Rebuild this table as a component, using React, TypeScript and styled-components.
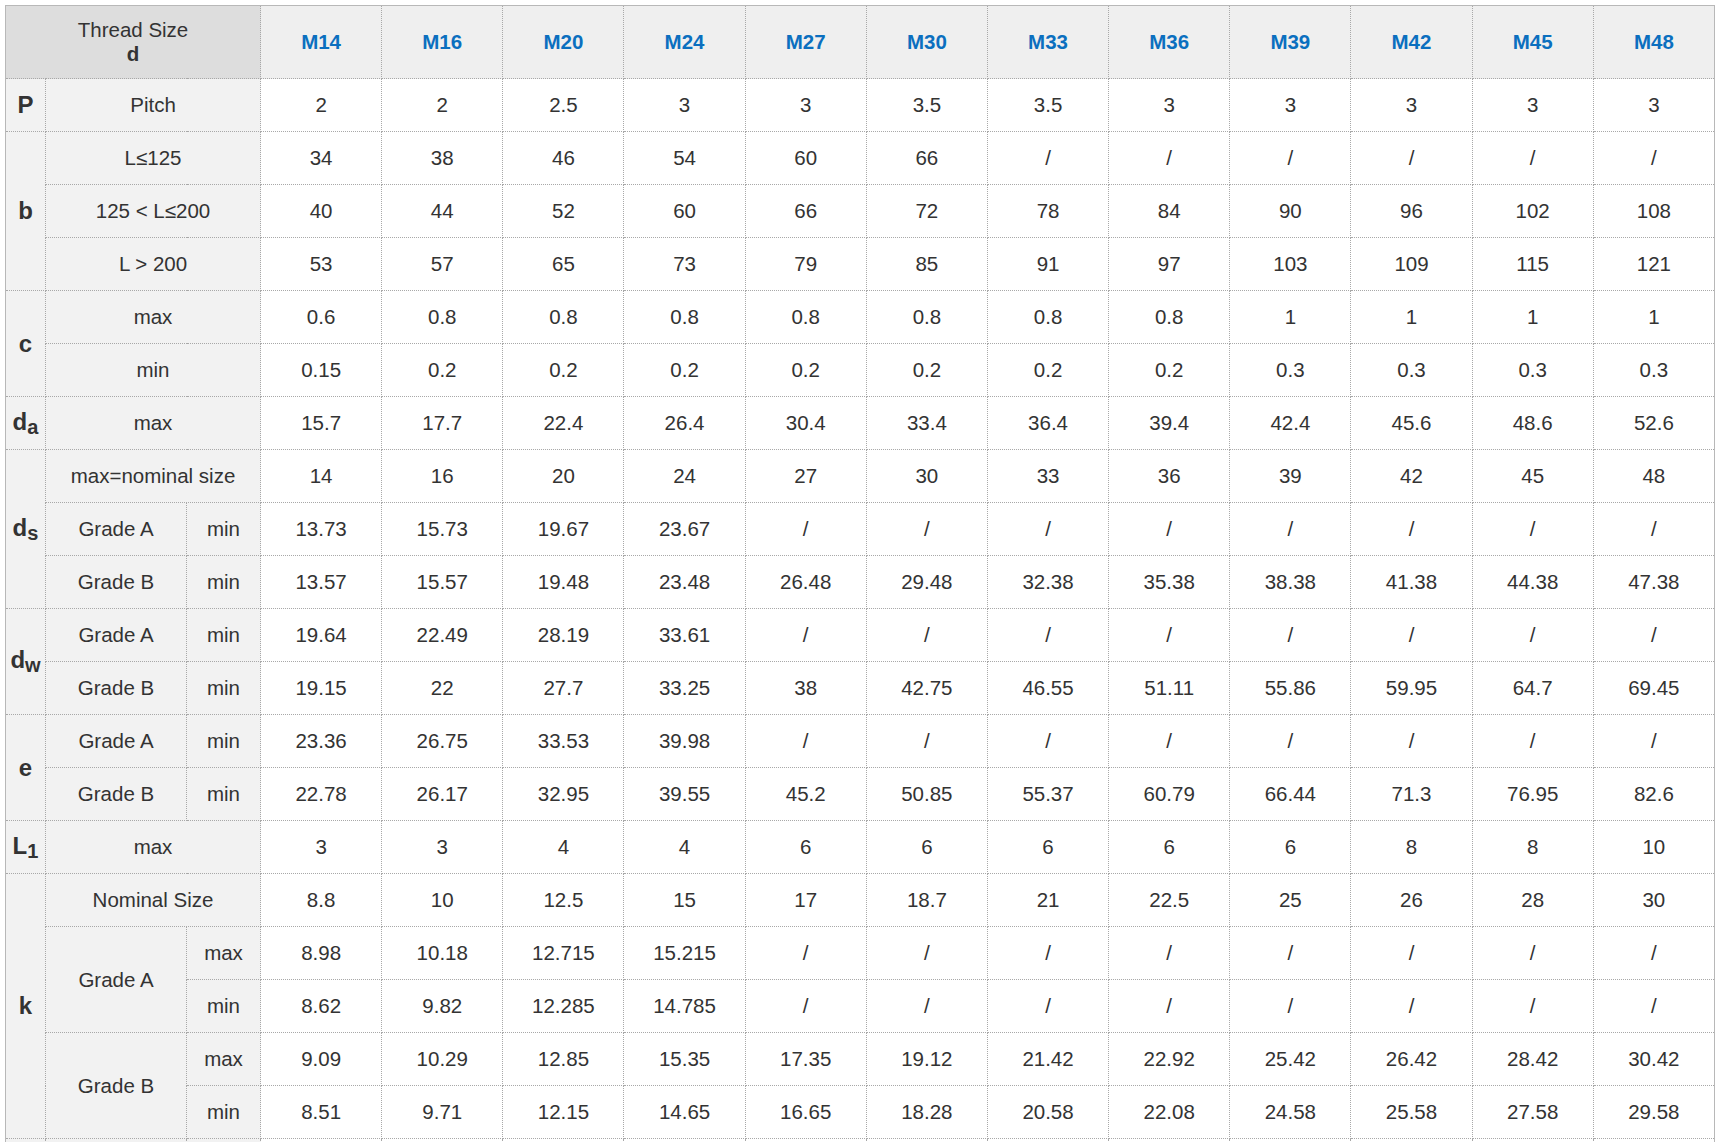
import React from "react";
import styled, { createGlobalStyle } from "styled-components";

const sizes = ["M14", "M16", "M20", "M24", "M27", "M30", "M33", "M36", "M39", "M42", "M45", "M48"];

const S = "/";

type Row = {
  symbol?: { main: string; sub?: string; span: number };
  label?: { text: string; span?: number; rows?: number };
  limit?: string;
  values: (string | number)[];
};

const blank = sizes.map(() => "");

const rows: Row[] = [
  { symbol: { main: "P", span: 1 }, label: { text: "Pitch", span: 2 }, values: [2, 2, 2.5, 3, 3, 3.5, 3.5, 3, 3, 3, 3, 3] },
  { symbol: { main: "b", span: 3 }, label: { text: "L≤125", span: 2 }, values: [34, 38, 46, 54, 60, 66, S, S, S, S, S, S] },
  { label: { text: "125 < L≤200", span: 2 }, values: [40, 44, 52, 60, 66, 72, 78, 84, 90, 96, 102, 108] },
  { label: { text: "L > 200", span: 2 }, values: [53, 57, 65, 73, 79, 85, 91, 97, 103, 109, 115, 121] },
  { symbol: { main: "c", span: 2 }, label: { text: "max", span: 2 }, values: [0.6, 0.8, 0.8, 0.8, 0.8, 0.8, 0.8, 0.8, 1, 1, 1, 1] },
  { label: { text: "min", span: 2 }, values: [0.15, 0.2, 0.2, 0.2, 0.2, 0.2, 0.2, 0.2, 0.3, 0.3, 0.3, 0.3] },
  { symbol: { main: "d", sub: "a", span: 1 }, label: { text: "max", span: 2 }, values: [15.7, 17.7, 22.4, 26.4, 30.4, 33.4, 36.4, 39.4, 42.4, 45.6, 48.6, 52.6] },
  { symbol: { main: "d", sub: "s", span: 3 }, label: { text: "max=nominal size", span: 2 }, values: [14, 16, 20, 24, 27, 30, 33, 36, 39, 42, 45, 48] },
  { label: { text: "Grade A" }, limit: "min", values: [13.73, 15.73, 19.67, 23.67, S, S, S, S, S, S, S, S] },
  { label: { text: "Grade B" }, limit: "min", values: [13.57, 15.57, 19.48, 23.48, 26.48, 29.48, 32.38, 35.38, 38.38, 41.38, 44.38, 47.38] },
  { symbol: { main: "d", sub: "w", span: 2 }, label: { text: "Grade A" }, limit: "min", values: [19.64, 22.49, 28.19, 33.61, S, S, S, S, S, S, S, S] },
  { label: { text: "Grade B" }, limit: "min", values: [19.15, 22, 27.7, 33.25, 38, 42.75, 46.55, 51.11, 55.86, 59.95, 64.7, 69.45] },
  { symbol: { main: "e", span: 2 }, label: { text: "Grade A" }, limit: "min", values: [23.36, 26.75, 33.53, 39.98, S, S, S, S, S, S, S, S] },
  { label: { text: "Grade B" }, limit: "min", values: [22.78, 26.17, 32.95, 39.55, 45.2, 50.85, 55.37, 60.79, 66.44, 71.3, 76.95, 82.6] },
  { symbol: { main: "L", sub: "1", span: 1 }, label: { text: "max", span: 2 }, values: [3, 3, 4, 4, 6, 6, 6, 6, 6, 8, 8, 10] },
  { symbol: { main: "k", span: 5 }, label: { text: "Nominal Size", span: 2 }, values: [8.8, 10, 12.5, 15, 17, 18.7, 21, 22.5, 25, 26, 28, 30] },
  { label: { text: "Grade A", rows: 2 }, limit: "max", values: ["8.98", "10.18", "12.715", "15.215", S, S, S, S, S, S, S, S] },
  { limit: "min", values: ["8.62", "9.82", "12.285", "14.785", S, S, S, S, S, S, S, S] },
  { label: { text: "Grade B", rows: 2 }, limit: "max", values: ["9.09", "10.29", "12.85", "15.35", "17.35", "19.12", "21.42", "22.92", "25.42", "26.42", "28.42", "30.42"] },
  { limit: "min", values: ["8.51", "9.71", "12.15", "14.65", "16.65", "18.28", "20.58", "22.08", "24.58", "25.58", "27.58", "29.58"] },
  // next row only peeks in at the bottom edge
  { symbol: { main: "", span: 1 }, label: { text: "" }, limit: "", values: blank },
];

const App: React.FC = () => {
  return (
    <>
      <GlobalStyle />
      <Page>
        <Table>
          <colgroup>
            <col style={{ width: 40 }} />
            <col style={{ width: 141 }} />
            <col style={{ width: 74 }} />
            {sizes.map((s) => (
              <col key={s} />
            ))}
          </colgroup>
          <thead>
            <HeadRow>
              <CornerCell colSpan={3}>
                Thread Size
                <br />
                <b>d</b>
              </CornerCell>
              {sizes.map((s) => (
                <SizeCell key={s}>{s}</SizeCell>
              ))}
            </HeadRow>
          </thead>
          <tbody>
            {rows.map((row, i) => (
              <BodyRow key={i}>
                {row.symbol && (
                  <SymbolCell rowSpan={row.symbol.span}>
                    {row.symbol.main}
                    {row.symbol.sub && <sub>{row.symbol.sub}</sub>}
                  </SymbolCell>
                )}
                {row.label && (
                  <LabelCell colSpan={row.label.span || 1} rowSpan={row.label.rows || 1}>
                    {row.label.text}
                  </LabelCell>
                )}
                {row.limit !== undefined && <LabelCell>{row.limit}</LabelCell>}
                {row.values.map((v, j) => (
                  <ValueCell key={j}>{v}</ValueCell>
                ))}
              </BodyRow>
            ))}
          </tbody>
        </Table>
      </Page>
    </>
  );
};

export default App;

const GlobalStyle = createGlobalStyle`
  body {
    margin: 0;
    background: #fff;
    font-family: "Liberation Sans", Arial, sans-serif;
    color: #333;
  }
`;

const Page = styled.div`
  padding: 5px 5px 0 5px;
`;

const Table = styled.table`
  width: 1710px;
  table-layout: fixed;
  border-collapse: collapse;
  border: 1px solid #b8b8b8;
  font-size: 20.5px;
  line-height: 1.15;
  td,
  th {
    border: 1px dotted #a8a8a8;
    text-align: center;
    vertical-align: middle;
    padding: 0;
  }
`;

const HeadRow = styled.tr`
  height: 73px;
  th {
    border-top: 1px solid #b8b8b8;
  }
`;

const CornerCell = styled.th`
  background: #dddddd;
  font-weight: normal;
  color: #333;
  b {
    font-weight: bold;
  }
`;

const SizeCell = styled.th`
  background: #efefef;
  color: #0b6fbf;
  font-weight: bold;
`;

const BodyRow = styled.tr`
  height: 53px;
`;

const SymbolCell = styled.td`
  background: #f2f2f2;
  font-weight: bold;
  font-size: 24px;
  border-left: 1px solid #b8b8b8 !important;
  sub {
    font-size: 20px;
    vertical-align: -4px;
  }
`;

const LabelCell = styled.td`
  background: #f2f2f2;
`;

const ValueCell = styled.td`
  background: #fff;
`;
